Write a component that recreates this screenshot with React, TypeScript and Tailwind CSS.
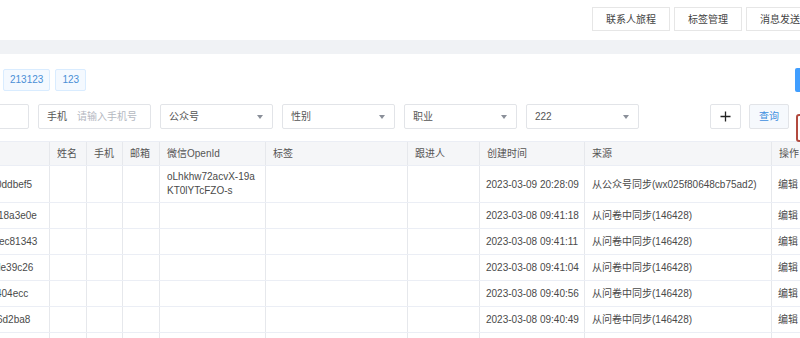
import React from "react";

const cols = "grid grid-cols-[50px_37px_36px_37px_106px_142px_72px_105px_187px_60px]";

const headers = ["", "姓名", "手机", "邮箱", "微信OpenId", "标签", "跟进人", "创建时间", "来源", "操作"];

// the table is scrolled sideways, so only the tail of each id shows
const rows = [
    { id: "0ddbef5", shift: "ml-[-4px]", openid: ["oLhkhw72acvX-19a", "KT0lYTcFZO-s"], time: "2023-03-09 20:28:09", source: "从公众号同步(wx025f80648cb75ad2)" },
    { id: "18a3e0e", shift: "ml-[-2px]", time: "2023-03-08 09:41:18", source: "从问卷中同步(146428)" },
    { id: "ec81343", shift: "ml-[-1px]", time: "2023-03-08 09:41:11", source: "从问卷中同步(146428)" },
    { id: "de39c26", shift: "ml-[-5px]", time: "2023-03-08 09:41:04", source: "从问卷中同步(146428)" },
    { id: "404ecc", shift: "ml-[-4px]", time: "2023-03-08 09:40:56", source: "从问卷中同步(146428)" },
    { id: "6d2ba8", shift: "ml-[-3px]", time: "2023-03-08 09:40:49", source: "从问卷中同步(146428)" },
    { id: "f02d4c1", shift: "ml-[-3px]", time: "2023-03-08 09:40:41", source: "从问卷中同步(146428)" },
];

function Caret() {
    return (
        <svg width="6" height="4" viewBox="0 0 6 4" className="shrink-0">
            <path d="M0 0 L6 0 L3 4 Z" fill="#8a8f99" />
        </svg>
    );
}

function Select({ label }: { label: string }) {
    return (
        <div className="w-[113px] h-[25px] shrink-0 flex items-center justify-between pl-[8px] pr-[9px] border border-[#e2e4e8] rounded-[2px] bg-white">
            <span className="text-[10px] text-[#555]">{label}</span>
            <Caret />
        </div>
    );
}

export default function App() {
    return (
        <div
            className="w-[800px] h-[338px] overflow-hidden bg-white text-[10px] text-[#4a4a4a]"
            style={{ fontFamily: '"Liberation Sans", "Noto Sans CJK SC", sans-serif' }}
        >
            {/* Top bar */}
            <div className="h-[40px] flex items-start pt-[7px] pl-[592px] gap-[4px] whitespace-nowrap">
                {["联系人旅程", "标签管理", "消息发送"].map((t) => (
                    <button
                        key={t}
                        className="h-[24px] shrink-0 px-[13px] border border-[#e6e6e6] bg-white text-[10px] text-[#444]"
                    >
                        {t}
                    </button>
                ))}
            </div>
            <div className="h-[14px] bg-[#f0f2f5]" />

            {/* Tags */}
            <div className="flex items-center gap-[5px] mt-[14px] pl-[3px] h-[23px]">
                {["213123", "123"].map((t) => (
                    <span
                        key={t}
                        className="h-[22px] px-[6px] flex items-center border border-[#d9ecff] bg-[#f4f9ff] rounded-[2px] text-[10px] text-[#4a8fd6]"
                    >
                        {t}
                    </span>
                ))}
                <div className="ml-auto mr-[-30px] w-[35px] h-[24px] bg-[#409eff] rounded-[2px]" />
            </div>

            {/* Filters */}
            <div className="flex items-start mt-[13px] ml-[-84px] gap-[9px] whitespace-nowrap">
                <div className="w-[113px] h-[25px] shrink-0 border border-[#e2e4e8] rounded-[2px]" />
                <div className="w-[113px] h-[25px] shrink-0 flex items-center border border-[#e2e4e8] rounded-[2px] pl-[8px]">
                    <span className="text-[#555] w-[30px]">手机</span>
                    <span className="text-[#b4b8bf]">请输入手机号</span>
                </div>
                <Select label="公众号" />
                <Select label="性别" />
                <Select label="职业" />
                <Select label="222" />
                <button className="ml-[62px] w-[31px] h-[25px] shrink-0 flex items-center justify-center border border-[#e2e4e8] rounded-[2px] bg-white">
                    <svg width="11" height="11" viewBox="0 0 11 11">
                        <path d="M5.5 0.5 V10.5 M0.5 5.5 H10.5" stroke="#222" strokeWidth="1.3" />
                    </svg>
                </button>
                <button className="w-[40px] h-[25px] shrink-0 ml-[-1px] border border-[#e2e4e8] rounded-[2px] bg-[#f6f9fd] text-[10px] text-[#3d8fe0]">
                    查询
                </button>
                <div className="mt-[10px] mb-[-14px] ml-[-2px] w-[30px] h-[28px] shrink-0 border-2 border-[#b24a3f] rounded-[3px] bg-white" />
            </div>

            {/* Table */}
            <div className="mt-[12px] border-t border-[#ebeef5]">
                <div className={`${cols} h-[24px] bg-[#f5f6f8] border-b border-[#ebeef5] text-[#555]`}>
                    {headers.map((h, i) => (
                        <div key={i} className="flex items-center pl-[7px] border-r border-[#e6e8ec] whitespace-nowrap overflow-hidden">
                            {h}
                        </div>
                    ))}
                </div>
                {rows.map((r, idx) => (
                    <div
                        key={r.id}
                        className={`${cols} ${idx === 0 ? "h-[37px]" : "h-[26px]"} border-b border-[#ebeef5]`}
                    >
                        <div className="flex items-center overflow-hidden whitespace-nowrap border-r border-[#e6e8ec]">
                            <span className={r.shift}>{r.id}</span>
                        </div>
                        <div className="border-r border-[#e6e8ec]" />
                        <div className="border-r border-[#e6e8ec]" />
                        <div className="border-r border-[#e6e8ec]" />
                        <div className="flex flex-col justify-center pl-[7px] leading-[14px] border-r border-[#e6e8ec]">
                            {r.openid?.map((l) => <span key={l}>{l}</span>)}
                        </div>
                        <div className="border-r border-[#e6e8ec]" />
                        <div className="border-r border-[#e6e8ec]" />
                        <div className="flex items-center pl-[6px] whitespace-nowrap border-r border-[#e6e8ec]">{r.time}</div>
                        <div className="flex items-center pl-[7px] whitespace-nowrap border-r border-[#e6e8ec]">{r.source}</div>
                        <div className="flex items-center pl-[6px] whitespace-nowrap">编辑</div>
                    </div>
                ))}
            </div>
        </div>
    );
}
